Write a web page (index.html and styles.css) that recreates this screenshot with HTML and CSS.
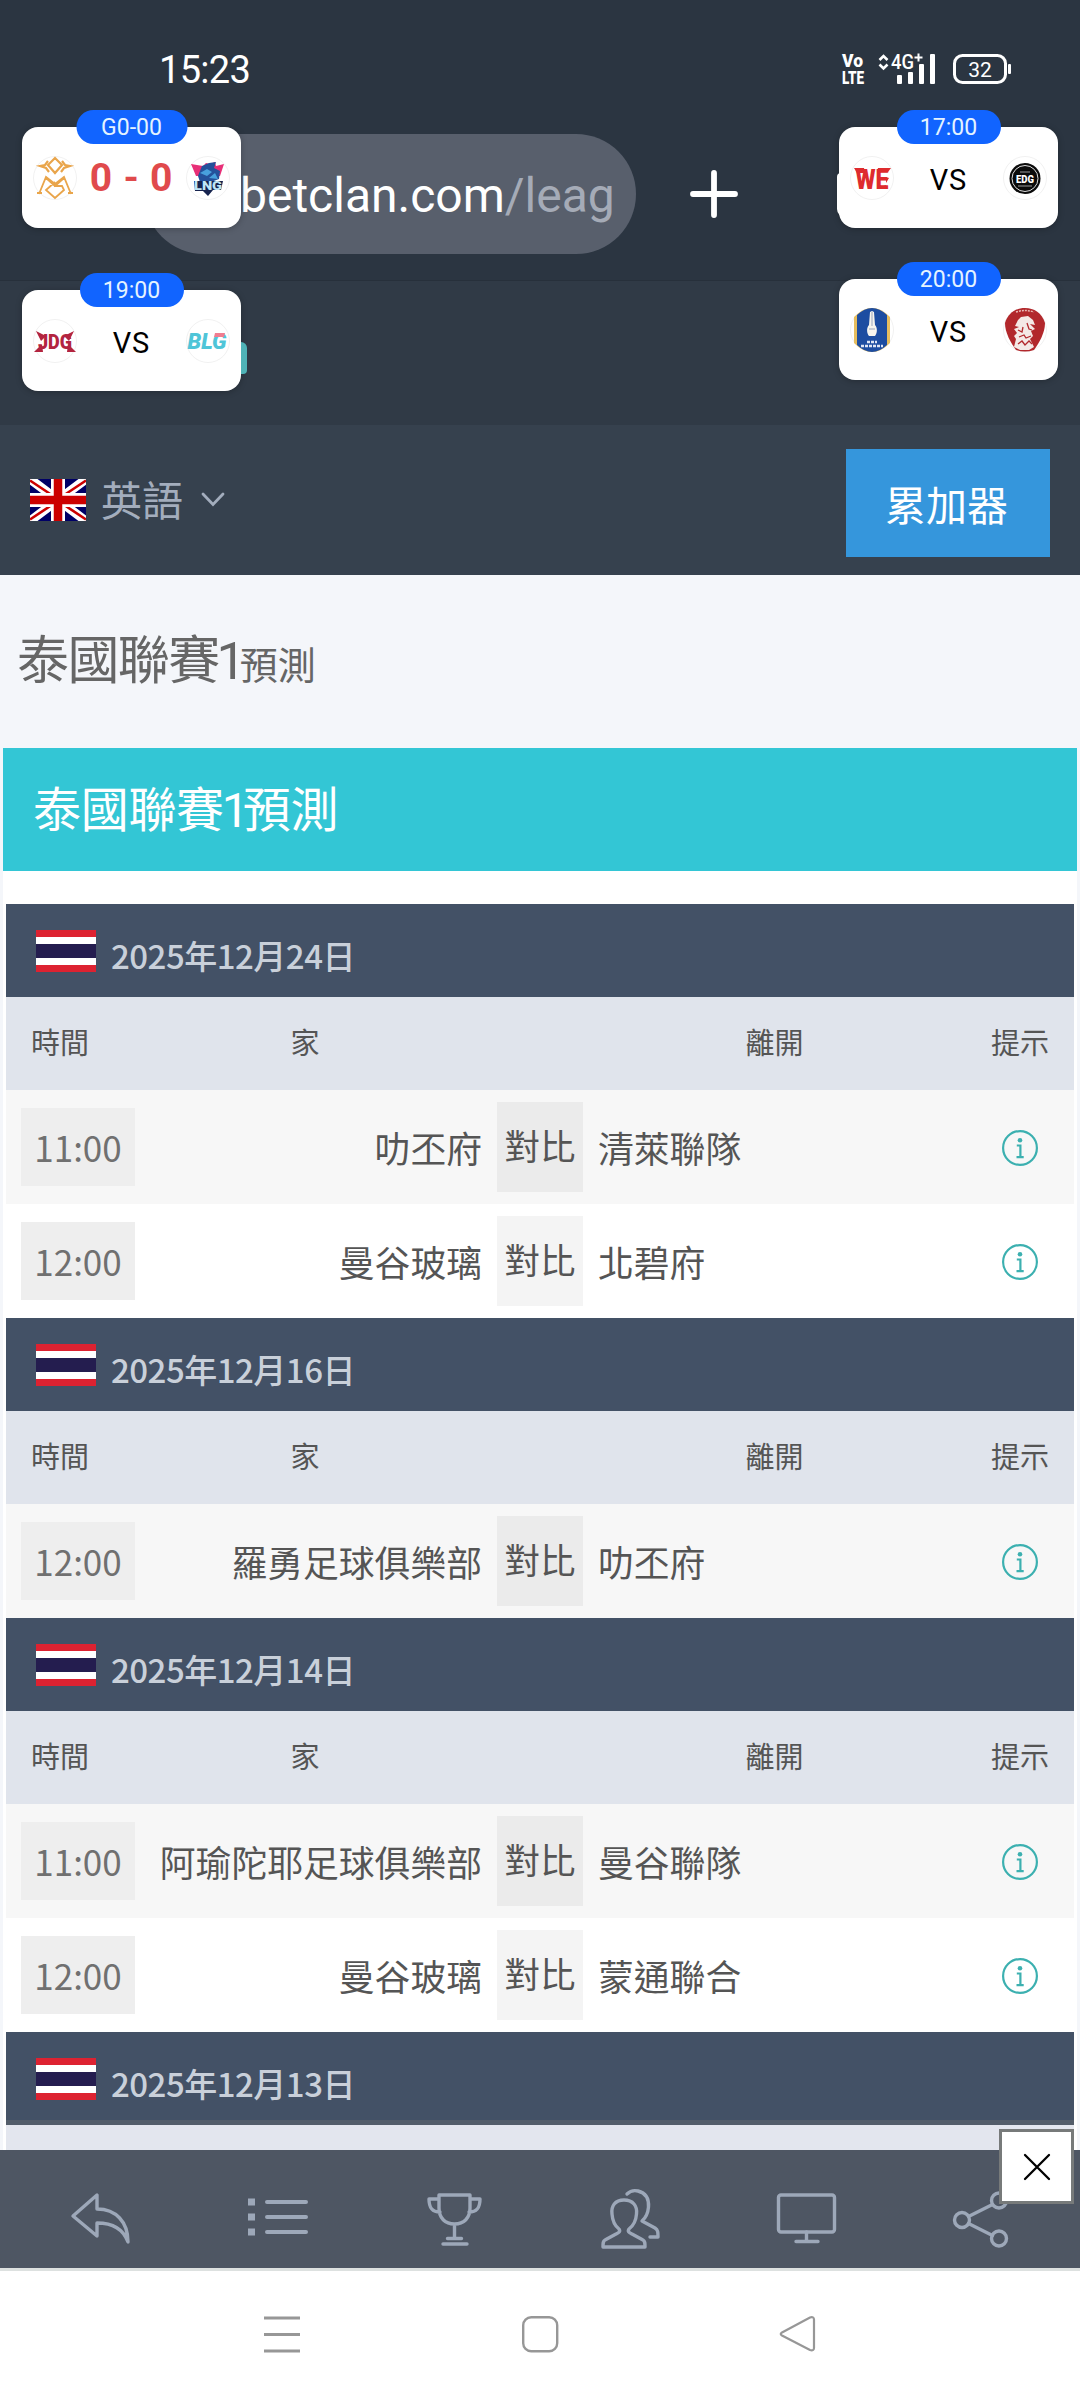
FILE: index.html
```
<!DOCTYPE html>
<html lang="zh-Hant">
  <head>
    <meta charset="UTF-8" />
    <title>泰國聯賽1預測</title>
    <link rel="stylesheet" href="styles.css">
  </head>
  <body>
    <!-- Shared icons -->
    <svg width="0" height="0" class="sprite">
      <symbol id="flag-th" viewBox="0 0 60 42">
        <rect width="60" height="42" fill="#dd2231" />
        <rect y="7" width="60" height="28" fill="#fff" />
        <rect y="14" width="60" height="14" fill="#241d4f" />
      </symbol>
      <symbol id="icon-info" viewBox="0 0 36 36">
        <circle cx="18" cy="18" r="16.9" fill="none" stroke="currentColor" stroke-width="2.2" />
        <circle cx="18" cy="10.2" r="2.3" fill="currentColor" />
        <path d="M14.8 15.5h3.6v11.6M14.5 27.1h7.2" fill="none" stroke="currentColor" stroke-width="2.2" />
      </symbol>
    </svg>

    <header class="status-bar">
      <span class="clock">15:23</span>
      <svg class="status-icons" width="172" height="34" viewBox="0 0 172 34" fill="#fff">
        <g font-family="Roboto, sans-serif" font-weight="900">
          <text x="2" y="15" font-size="18" textLength="21" lengthAdjust="spacingAndGlyphs">Vo</text>
          <text x="2" y="32" font-size="19" textLength="22" lengthAdjust="spacingAndGlyphs">LTE</text>
        </g>
        <path d="M39.5 8l4-4 4 4M39.5 12.5l4 4 4-4" fill="none" stroke="#fff" stroke-width="2.6" />
        <text x="51" y="17" font-size="20" font-weight="500" textLength="23" lengthAdjust="spacingAndGlyphs">4G</text>
        <path d="M74.5 5.5h8M78.5 1.500v8" stroke="#fff" stroke-width="2" />
        <rect x="57" y="23" width="5" height="9" rx="1" />
        <rect x="68" y="20" width="5" height="12" rx="1" />
        <rect x="79" y="12" width="5" height="20" rx="1" />
        <rect x="90" y="2" width="5" height="30" rx="1" />
        <rect x="114.5" y="3.5" width="51" height="27" rx="8" fill="none" stroke="#fff" stroke-width="3" />
        <rect x="168" y="12" width="3" height="10" rx="1" />
        <text x="140" y="24.5" font-size="21" text-anchor="middle">32</text>
      </svg>
    </header>

    <div class="toolbar">
      <div class="address"><span class="host">betclan.com</span><span class="path">/leag</span></div>
      <svg class="new-tab" width="48" height="48" viewBox="0 0 48 48">
        <path d="M24 3v42M3 24h42" stroke="#fff" stroke-width="5.8" stroke-linecap="round" />
      </svg>
    </div>

    <div class="banner"></div>

    <nav class="site-nav">
      <div class="language">
        <svg class="flag-gb" width="56" height="42" viewBox="0 0 56 42">
          <rect width="56" height="42" fill="#006" />
          <path d="M0 0l56 42M56 0L0 42" stroke="#fff" stroke-width="9" />
          <path d="M0 1.5l21 14M56 1.5l-21 14M0 40.5l21-14M56 40.5l-21-14" stroke="#c00" stroke-width="2.6" />
          <path d="M28 0v42M0 21h56" stroke="#fff" stroke-width="14" />
          <path d="M28 0v42M0 21h56" stroke="#c00" stroke-width="8.5" />
        </svg>
        <span>英語</span>
        <svg width="24" height="16" viewBox="0 0 24 16">
          <path d="M2 2l10 10.5L22 2" fill="none" stroke="currentColor" stroke-width="2.8" stroke-linecap="round" />
        </svg>
      </div>
      <button class="acca-btn">累加器</button>
    </nav>

    <main class="page">
      <h1>泰國聯賽<b>1</b><small>預測</small></h1>

      <div class="panel">
        <h2>泰國聯賽<b>1</b>預測</h2>

        <section class="matchday">
          <h3><svg class="flag"><use href="#flag-th" /></svg>2025年12月24日</h3>
          <div class="columns">
            <span>時間</span><span>家</span><span></span><span>離開</span><span>提示</span>
          </div>
          <div class="match">
            <span class="time">11:00</span>
            <span class="home">叻丕府</span>
            <span class="versus">對比</span>
            <span class="away">清萊聯隊</span>
            <svg class="tip"><use href="#icon-info" /></svg>
          </div>
          <div class="match">
            <span class="time">12:00</span>
            <span class="home">曼谷玻璃</span>
            <span class="versus">對比</span>
            <span class="away">北碧府</span>
            <svg class="tip"><use href="#icon-info" /></svg>
          </div>
        </section>

        <section class="matchday">
          <h3><svg class="flag"><use href="#flag-th" /></svg>2025年12月16日</h3>
          <div class="columns">
            <span>時間</span><span>家</span><span></span><span>離開</span><span>提示</span>
          </div>
          <div class="match">
            <span class="time">12:00</span>
            <span class="home">羅勇足球俱樂部</span>
            <span class="versus">對比</span>
            <span class="away">叻丕府</span>
            <svg class="tip"><use href="#icon-info" /></svg>
          </div>
        </section>

        <section class="matchday">
          <h3><svg class="flag"><use href="#flag-th" /></svg>2025年12月14日</h3>
          <div class="columns">
            <span>時間</span><span>家</span><span></span><span>離開</span><span>提示</span>
          </div>
          <div class="match">
            <span class="time">11:00</span>
            <span class="home">阿瑜陀耶足球俱樂部</span>
            <span class="versus">對比</span>
            <span class="away">曼谷聯隊</span>
            <svg class="tip"><use href="#icon-info" /></svg>
          </div>
          <div class="match">
            <span class="time">12:00</span>
            <span class="home">曼谷玻璃</span>
            <span class="versus">對比</span>
            <span class="away">蒙通聯合</span>
            <svg class="tip"><use href="#icon-info" /></svg>
          </div>
        </section>

        <section class="matchday cut">
          <h3><svg class="flag"><use href="#flag-th" /></svg>2025年12月13日</h3>
        </section>
      </div>
    </main>

    <footer class="tab-bar">
      <svg width="66" height="66" viewBox="0 0 66 66">
        <path d="M5 31L29 10v14c19 0 31 13 31 33-4-11-13-19-31-19v13z" />
      </svg>
      <svg width="66" height="66" viewBox="0 0 66 66">
        <path d="M23 17h39M23 32h39M23 47h39" stroke-width="4" />
        <path d="M4 17h7M4 32h7M4 47h7" stroke-width="7" stroke-linecap="butt" />
      </svg>
      <svg width="66" height="66" viewBox="0 0 66 66">
        <path d="M18 10h31v13c0 10-6 16-15.5 16S18 33 18 23zM18 14H8c0 9 3 13 11 13M49 14h10c0 9-3 13-11 13M33.5 39v14M26.5 53.5h14M22 59h24" />
      </svg>
      <svg width="66" height="66" viewBox="0 0 66 66">
        <path d="M27 15c-9 0-13 6-12 14 .5 7 3 12 7 15 2 3-1 4-3 5L8 55c-2 1-2 3-2 7h42c0-4 0-6-2-7l-11-6c-2-1-5-2-3-5 4-3 7-8 7.5-15C40.5 21 36 15 27 15z" />
        <path d="M30 9c3-3 7-4 11-3 8 2 11 8 10.500 16-.5 6-3 11-6.500 14l13 7c3 2 3 4 3 9h-8" />
      </svg>
      <svg width="66" height="66" viewBox="0 0 66 66">
        <rect x="4.5" y="10" width="56" height="37" rx="2.5" />
        <path d="M32.5 47v8M22 56.5h22" />
      </svg>
      <svg width="66" height="66" viewBox="0 0 66 66">
        <circle cx="12" cy="35" r="7.5" />
        <circle cx="49" cy="15.5" r="7.5" />
        <circle cx="49" cy="53.5" r="7.5" />
        <path d="M18.5 31.5l24-12M18.500 38.500l24 12" />
      </svg>
      <button class="close-btn">
        <svg width="28" height="28" viewBox="0 0 28 28">
          <path d="M2 2l24 24M26 2L2 26" stroke="#000" stroke-width="2.3" stroke-linecap="round" />
        </svg>
      </button>
    </footer>

    <div class="system-nav">
      <svg width="40" height="40" viewBox="0 0 40 40"><path d="M2 4h36M2 20.5h36M2 37h36" stroke-width="3" /></svg>
      <svg width="40" height="40" viewBox="0 0 40 40"><rect x="3.2" y="3.2" width="34" height="34" rx="8" stroke-width="2.4" /></svg>
      <svg width="40" height="40" viewBox="0 0 40 40"><path d="M4 18.5L32 3.500c2.500-1 4 0 4 2v28.500c0 2-1.500 3-4 2L4 21.500c-1.700-1-1.700-2 0-3z" stroke-width="2.2" /></svg>
    </div>

    <!-- Floating score widgets, pinned over the browser -->
    <div class="score-card card-lng">
      <span class="badge">G0-00</span>
      <svg width="44" height="44" viewBox="0 0 44 44" fill="none" stroke="#e9a54b" stroke-width="2.2">
        <circle class="ring" cx="22" cy="22" r="21.5" />
        <path d="M22 2l7 7-7 8-7-8zM15 5l-3 4-5 1 6 2 3 4M29 5l3 4 5 1-6 2-3 4" />
        <path d="M6 38l7-17 9 7 9-7 7 17M13 22l9 8 9-8M22 26l-9 8 9 8 9-8-2-4h-8M4 37h5M35 37h5" stroke-width="1.8" />
      </svg>
      <span class="score">0 - 0</span>
      <svg width="44" height="44" viewBox="0 0 44 44">
        <circle class="ring" cx="22" cy="22" r="21.5" />
        <path d="M5 8l12 2 3-3 4 1 5-2 1 4 8-2-4 12H10z" fill="#e72f77" />
        <path d="M12 20l4-10 7-3 7-1-2 6 6 3-1 8-8 3H14z" fill="#24519b" />
        <path d="M14 17l7-4 5 3-5 4zM23 22l6-5 3 6z" fill="#48a0dd" />
        <path d="M8 25h29l-2 9H27l-5 6-5-5H9z" fill="#17244f" />
        <text x="22" y="34" font-size="12" class="crest-text" textLength="28" lengthAdjust="spacingAndGlyphs" fill="#bfe6f7">LNG</text>
      </svg>
    </div>

    <div class="score-card card-blg">
      <span class="badge">19:00</span>
      <svg width="44" height="44" viewBox="0 0 44 44">
        <circle class="ring" cx="22" cy="22" r="21.5" />
        <path d="M3 12l10 5-5 5zM41 12l-10 5 5 5zM1 33l8-8 1 8zM43 33l-8-8-1 8z" fill="#b3243f" />
        <text x="22" y="30" font-size="21" class="crest-text" textLength="34" lengthAdjust="spacingAndGlyphs" fill="#b3243f">JDG</text>
      </svg>
      <span class="vs">VS</span>
      <svg width="44" height="44" viewBox="0 0 44 44">
        <circle class="ring" cx="22" cy="22" r="21.5" />
        <text x="21" y="29.5" font-size="22" class="crest-text slanted" textLength="39" lengthAdjust="spacingAndGlyphs" fill="#4fc5d8">BLG</text>
        <path d="M29 14h10l-1 4H28z" fill="#f07d90" />
      </svg>
    </div>

    <div class="score-card card-edg">
      <span class="badge">17:00</span>
      <svg width="44" height="44" viewBox="0 0 44 44">
        <circle class="ring" cx="22" cy="22" r="21.5" />
        <text x="22" y="33" font-size="27" class="crest-text" textLength="33" lengthAdjust="spacingAndGlyphs" fill="#de2b2e">WE</text>
        <path d="M4 12h10l1 5H7zM28 12h13l-3 4H27zM36 21l3 1-3 5zM36 29l-1 4h-8z" fill="#de2b2e" />
      </svg>
      <span class="vs">VS</span>
      <svg width="44" height="44" viewBox="0 0 44 44">
        <circle class="ring" cx="22" cy="22" r="21.5" />
        <circle cx="22" cy="22.5" r="15.5" fill="#0a0a0a" />
        <circle cx="22" cy="22.5" r="13" fill="none" stroke="#ddd" stroke-width="1" />
        <path d="M17 16h10M15 30h14" stroke="#999" stroke-width="1.2" />
        <text x="22" y="26.5" font-size="10" class="crest-text" textLength="18" lengthAdjust="spacingAndGlyphs" fill="#fff">EDG</text>
      </svg>
    </div>

    <div class="score-card card-bgpu">
      <span class="badge">20:00</span>
      <svg width="44" height="44" viewBox="0 0 44 44">
        <circle class="ring" cx="22" cy="22" r="21.5" />
        <path d="M4 9Q22-9 40 9v26Q22 53 4 35z" fill="#e6bd5e" />
        <path d="M7 7Q22-7 37 7v30Q22 51 7 37z" fill="#1d4da1" />
        <path d="M20 4l2-1 2 1 1 13c3 3 2 9 0 11h-6c-2-2-3-8 0-11z" fill="#f6f4ee" />
        <path d="M22 4v14M19 21h6" stroke="#9aa6bd" stroke-width="1" />
        <path d="M17 34h10M11 38h22" stroke="#dfe6f5" stroke-width="2.4" stroke-dasharray="3 1" />
      </svg>
      <span class="vs">VS</span>
      <svg width="44" height="44" viewBox="0 0 44 44">
        <circle class="ring" cx="22" cy="22" r="21.5" />
        <path d="M22 0c9 0 17 5 20 15 0 10-6 20-11 27-6 2-12 2-18 0C8 35 2 25 2 15 5 5 13 0 22 0z" fill="#b2282c" />
        <path d="M13 4q9-3 18 0" fill="none" stroke="#e9b9b5" stroke-width="1.5" stroke-dasharray="2 1" />
        <path d="M12 18l3-6 3-3 7-1 5 4 2 5-5-1 5 5-4 2 2 5-3 3 4 8-5 3h-9l-6-3 2-8-2-3 3-3-3-4 5-2z" fill="#f4e9e6" />
        <path d="M15 22l4 2 1-5M24 15l2 6 3 1M16 29l5-2 2 3 5-2M15 36l4-3 3 4 4-4 3 3" fill="none" stroke="#b2282c" stroke-width="1.3" />
      </svg>
    </div>
  </body>
</html>
```
FILE: styles.css
```
* {
  box-sizing: border-box;
}
body {
  position: relative;
  display: flex;
  flex-direction: column;
  width: 1080px;
  height: 2400px;
  margin: 0;
  overflow: hidden;
  background: #fff;
  color: #555;
  font-family: Roboto, "Noto Sans CJK TC", sans-serif;
}
h1,
h2,
h3 {
  margin: 0;
  font-weight: 400;
}
button {
  padding: 0;
  border: none;
  font-family: inherit;
}
.sprite {
  position: absolute;
}

/* Phone status bar */
.status-bar {
  display: flex;
  justify-content: space-between;
  height: 128px;
  padding: 52px 68px 0 159px;
  background: #2b3541;
}
.status-icons {
  overflow: visible;
}
.clock {
  color: #fff;
  font-size: 38px;
  line-height: 36px;
  letter-spacing: -0.7px;
}

/* Browser toolbar */
.toolbar {
  display: flex;
  align-items: center;
  gap: 54px;
  height: 153px;
  padding: 0 0 21px 144px;
  background: #2b3541;
  border-bottom: 1px solid #27303b;
}
.address {
  width: 492px;
  height: 120px;
  padding-left: 96px;
  border-radius: 60px;
  background: #585f6c;
  font-size: 48px;
  line-height: 124px;
  white-space: nowrap;
}
.host {
  color: #fff;
}
.path {
  color: #a5abb7;
}
.banner {
  height: 144px;
  background: #303a46;
}

/* Site header */
.site-nav {
  display: flex;
  align-items: center;
  justify-content: space-between;
  height: 150px;
  padding: 6px 30px 0;
  background: #36414e;
}
.language {
  display: flex;
  align-items: center;
  color: #a3adbd;
  font-size: 41px;
  line-height: 50px;
  margin-bottom: 6px;
}
.language span {
  margin: 3px 18px 0 15px;
}
.acca-btn {
  width: 204px;
  height: 108px;
  padding-right: 3px;
  background: #3596dc;
  color: #fff;
  font-size: 41px;
}

/* Predictions */
.page {
  height: 1575px;
  overflow: hidden;
  background: #f4f6fa;
}
h1 {
  height: 173px;
  padding-left: 17px;
  color: #666;
  font-size: 52px;
  line-height: 174px;
  letter-spacing: -1.6px;
}
h1 b,
h2 b {
  font-weight: 400;
  letter-spacing: -6px;
  margin-left: -2px;
}
h1 small {
  font-size: 38px;
  letter-spacing: 0;
}
.panel {
  margin: 0 3px;
  padding: 0 3px;
  background: #fff;
}
h2 {
  height: 123px;
  margin: 0 -3px 33px;
  padding-left: 30px;
  background: #33c6d5;
  color: #fff;
  font-size: 48px;
  line-height: 125px;
  letter-spacing: -0.3px;
}
h3 {
  display: flex;
  align-items: center;
  gap: 15px;
  height: 93px;
  padding: 8px 0 0 30px;
  background: #435166;
  color: #c9d0da;
  font-family: "Noto Sans CJK TC", sans-serif;
  font-size: 33px;
  font-weight: 500;
  letter-spacing: -0.5px;
}
.flag {
  width: 60px;
  height: 42px;
  margin-top: -8px;
}
.columns {
  display: grid;
  grid-template-columns: 108px 382px 87px 1fr 108px;
  height: 93px;
  background: #e0e4ec;
  font-size: 29px;
  line-height: 95px;
  text-align: center;
}
.match {
  display: grid;
  grid-template-columns: 114px 362px 86px 1fr 108px;
  align-items: center;
  height: 114px;
  padding-left: 15px;
  font-size: 35.8px;
}
.match:nth-child(odd) {
  background: #f7f7f7;
}
.time {
  height: 78px;
  background: #eee;
  color: #707070;
  font-family: "Noto Sans CJK TC", sans-serif;
  font-size: 35px;
  line-height: 77px;
  text-align: center;
}
.home {
  padding-right: 15px;
  text-align: right;
}
.versus {
  height: 90px;
  background: #f4f4f4;
  font-size: 35.5px;
  line-height: 93px;
  text-align: center;
}
.match:nth-child(odd) .versus {
  background: #ebebeb;
}
.away {
  padding-left: 15px;
}
.tip {
  width: 36px;
  height: 36px;
  margin: 2px auto 0;
  color: #3cb0b0;
}
.cut {
  padding-bottom: 25px;
  background: #e3e6ee;
}
.cut h3 {
  border-bottom: 5px solid #535d6a;
  padding-top: 13px;
}

/* Bottom bars */
.tab-bar {
  position: relative;
  display: flex;
  gap: 110.4px;
  height: 121px;
  padding: 35px 0 0 68px;
  background: #4e5663;
  border-bottom: 3px solid #dde1e0;
}
.tab-bar > svg {
  flex: none;
  fill: none;
  stroke: #9da8b9;
  stroke-width: 3.4;
  stroke-linecap: round;
  stroke-linejoin: round;
}
.close-btn {
  position: absolute;
  top: -21px;
  right: 6px;
  display: grid;
  place-items: center;
  width: 75px;
  height: 75px;
  border: 3px solid #777a7a;
  background: #fff;
}
.system-nav {
  display: flex;
  justify-content: center;
  gap: 218px;
  padding-top: 43px;
}
.system-nav svg {
  fill: none;
  stroke: #979797;
}

/* Floating score cards */
.score-card {
  position: absolute;
  display: flex;
  align-items: center;
  justify-content: space-between;
  width: 219px;
  height: 101px;
  padding: 0 11px;
  border-radius: 16px;
  background: #fff;
  box-shadow: 0 1px 6px rgba(0, 0, 0, 0.25);
  color: #000;
}
.badge {
  position: absolute;
  top: -17px;
  left: 50%;
  width: 104px;
  height: 34px;
  border-radius: 17px;
  background: #1164ff;
  color: #e4f3ff;
  font-size: 23px;
  line-height: 35px;
  text-align: center;
  transform: translateX(-50%);
}
.vs {
  margin-top: 5px;
  font-size: 29px;
  letter-spacing: 1px;
}
.score {
  color: #e04a4c;
  font-size: 39px;
  font-weight: 700;
  letter-spacing: 0.8px;
}
.ring {
  fill: #fff;
  stroke: #f1f1f1;
  stroke-width: 1;
}
.crest-text {
  font-weight: 900;
  text-anchor: middle;
}
.slanted {
  font-style: italic;
}
.card-lng {
  top: 127px;
  left: 22px;
}
.card-lng .badge {
  width: 111px;
}
.card-blg {
  top: 290px;
  left: 22px;
}
/* edge of the mascot peeking out from behind the card */
.card-blg::after {
  content: "";
  position: absolute;
  top: 52px;
  left: 219px;
  width: 6px;
  height: 32px;
  border-radius: 0 6px 4px 0;
  background: #4fb3b7;
}
.card-edg {
  top: 127px;
  left: 839px;
}
.card-edg::before {
  content: "";
  position: absolute;
  top: 46px;
  left: -2px;
  width: 12px;
  height: 44px;
  border-radius: 4px 0 0 8px;
  background: #fff;
}
.card-bgpu {
  top: 279px;
  left: 839px;
}
```
